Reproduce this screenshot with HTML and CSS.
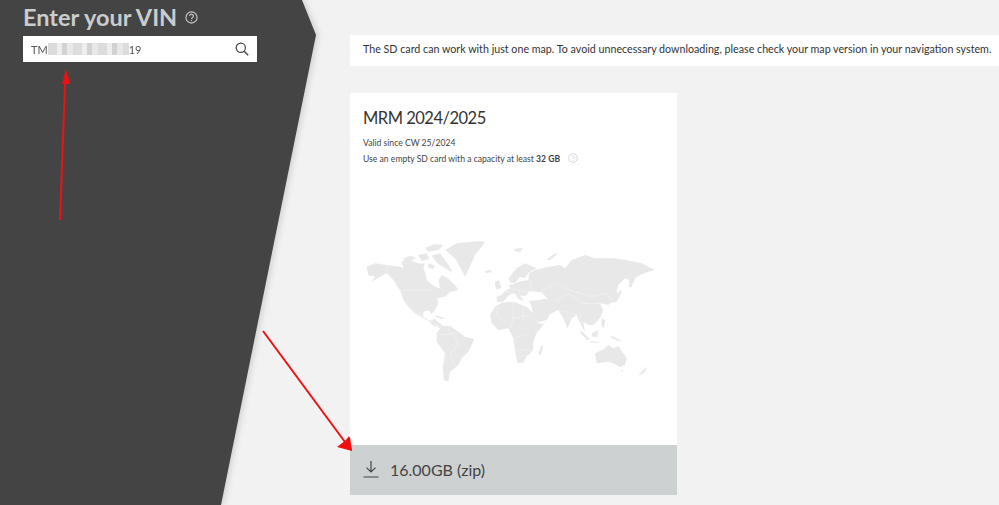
FILE: index.html
```html
<!DOCTYPE html>
<html lang="en">
<head>
    <meta charset="UTF-8">
    <meta name="viewport" content="width=device-width, initial-scale=1.0">
    <title>Map update</title>
    <link rel="stylesheet" href="styles.css">
</head>
<body>
    <div class="page">
        <div class="side-wrap">
            <aside class="side">
                <div class="side-title">
                    <h1>Enter your VIN</h1>
                    <svg class="help-icon" width="13" height="13" viewBox="0 0 13 13">
                        <circle cx="6.5" cy="6.5" r="5.6" fill="none" stroke="#c9cdcd" stroke-width="1.1"/>
                        <path d="M4.6 5.1a1.9 1.9 0 1 1 2.9 1.6c-.7.4-1 .7-1 1.4" fill="none" stroke="#c9cdcd" stroke-width="1.1"/>
                        <circle cx="6.5" cy="9.6" r=".7" fill="#c9cdcd"/>
                    </svg>
                </div>
                <div class="vin-box">
                    <span class="vin-text">TM</span>
                    <span class="vin-blur"></span>
                    <span class="vin-text">19</span>
                    <svg class="search-icon" width="14" height="14" viewBox="0 0 14 14">
                        <circle cx="5.8" cy="5.8" r="4.6" fill="none" stroke="#444" stroke-width="1.2"/>
                        <path d="M9.2 9.2l4 4" stroke="#444" stroke-width="1.4"/>
                    </svg>
                </div>
            </aside>
        </div>

        <main class="content">
            <div class="notice">The SD card can work with just one map. To avoid unnecessary downloading, please check your map version in your navigation system.</div>

            <section class="map-card">
                <div class="card-head">
                    <h2>MRM 2024/2025</h2>
                    <p>Valid since CW 25/2024</p>
                    <p>Use an empty SD card with a capacity at least <b>32 GB</b>
                        <svg class="small-help" width="10" height="10" viewBox="0 0 10 10">
                            <circle cx="5" cy="5" r="4.4" fill="none" stroke="#cfcfcf" stroke-width=".8"/>
                            <path d="M3.7 4a1.3 1.3 0 1 1 2 1.1c-.5.3-.7.5-.7 1" fill="none" stroke="#cfcfcf" stroke-width=".8"/>
                            <circle cx="5" cy="7.4" r=".5" fill="#cfcfcf"/>
                        </svg>
                    </p>
                </div>

                <!-- world map, traced in three groups (americas / eurasia / south) -->
                <svg class="world" width="327" height="170" viewBox="350 225 327 170">
                    <g class="land" transform="translate(360 235) scale(.3333)">
                        <path d="M20 95L45 85 80 90 120 95 130 100 125 78 145 72 165 82 185 88 195 112 200 135 225 155 240 160 236 135 245 120 262 128 285 150 296 165 272 170 255 185 232 190 235 205 225 225 215 237 205 226 190 230 190 245 205 255 215 258 222 250 235 262 250 272 246 278 225 268 210 260 190 250 165 235 145 215 130 195 122 170 100 135 80 115 60 125 35 140 45 125 25 120Z"/>
                        <path d="M255 45L290 25 360 18 375 22 345 60 325 105 315 125 300 95 285 70Z"/>
                        <path d="M215 62L240 55 262 85 278 112 255 100 232 85ZM195 38L225 28 250 30 235 45 205 50ZM125 72L150 62 170 68 150 78ZM175 60L200 55 208 72 185 78ZM205 85L225 92 220 102 205 98ZM170 88L195 85 190 100 175 98ZM145 120L160 118 150 125Z"/>
                        <path d="M225 240L255 250 245 252 228 246Z"/>
                        <path class="border" d="M82 90V118M122 165H215M150 215L195 250"/>
                    </g>
                    <g class="land" transform="translate(485 235) scale(.3333)">
                        <path d="M35 200L35 185 50 180 60 168 75 160 72 150 88 146 100 140 130 135 132 115 150 105 190 95 225 90 240 100 260 75 300 60 330 70 390 70 420 75 470 85 510 105 490 110 465 120 450 130 435 155 432 135 420 130 400 150 395 170 405 185 385 195 370 210 345 205 355 225 345 250 325 270 310 270 295 260 300 290 285 265 275 240 260 250 248 280 235 250 220 225 195 238 185 255 160 262 145 238 138 210 132 198 168 194 178 190 190 195 170 172 132 168 124 182 105 182 118 198 100 192 90 175 72 180 55 200Z"/>
                        <path d="M70 130L95 100 120 85 155 100 132 112 118 130 105 125 90 145 75 142Z"/>
                        <path d="M30 140L42 135 50 160 32 162Z"/>
                        <path d="M0 108L18 105 20 112 4 114Z"/>
                        <path d="M85 42L115 38 105 52 90 48ZM185 75L205 58 220 55 195 75Z"/>
                        <path d="M365 207L390 190 405 165 410 172 395 200Z"/>
                        <path d="M430 155L445 128 450 132 438 158Z"/>
                        <path d="M380 175L392 185 378 202 368 195Z"/>
                        <path class="border" d="M75 160L130 172M100 165L110 195M170 170L210 145 255 165 320 185 360 175 385 195M210 200L250 175 290 205 345 205M220 225L275 240M285 225L290 270M135 135L150 185M60 170L90 175"/>
                    </g>
                    <g class="land" transform="translate(430 300) scale(.3333)">
                        <path d="M180 45L195 20 215 8 250 5 290 20 310 40 325 70 342 72 320 100 310 125 310 150 290 170 280 188 262 188 255 150 250 115 235 85 205 90 185 70Z"/>
                        <path d="M333 140L340 135 332 165 325 162Z"/>
                        <path d="M20 100L35 78 60 78 85 95 105 110 133 118 115 155 95 175 85 195 60 215 55 245 42 240 38 200 45 160 20 125Z"/>
                        <path d="M0 58L20 80 35 78 30 84 14 80 0 68Z"/>
                        <path class="border" d="M205 20L200 45 225 70M250 5L250 55 305 45M250 55L240 85M280 20V60M250 115L300 100M255 150L310 150M265 170L300 165M30 105L70 100 85 135 60 160 75 195M55 80V100M50 160L40 195"/>
                    </g>
                    <g class="land" transform="translate(570 310) scale(.3333)">
                        <path d="M75 130L100 118 115 105 130 115 145 108 170 145 165 165 150 172 130 160 115 155 80 160Z"/>
                        <path d="M152 180L160 180 156 187Z"/>
                        <path d="M205 195L225 175 232 170 222 190Z"/>
                        <path d="M120 75L160 95 145 93 125 84Z"/>
                        <path d="M65 70L85 60 82 80 66 80Z"/>
                        <path d="M30 60L60 88 52 90 32 70ZM60 94L100 97 65 99Z"/>
                        <path d="M95 25L105 30 102 55 94 45Z"/>
                    </g>
                </svg>

                <a class="download-bar" href="#">
                    <svg width="16" height="18" viewBox="0 0 16 18">
                        <path d="M8 1v11M3.5 7.6L8 12l4.500-4.400M.5 17h15" fill="none" stroke="#444" stroke-width="1.200"/>
                    </svg>
                    <span>16.00GB (zip)</span>
                </a>
            </section>
        </main>
    </div>

    <!-- red arrows drawn over the screenshot -->
    <svg class="arrows" width="999" height="505" viewBox="0 0 999 505">
        <path d="M60 220L65 84" stroke="#f01010" stroke-width="2" fill="none"/>
        <path d="M66 69L62 84 70 84Z" fill="#f01010"/>
        <path d="M263 331L345 442" stroke="#f01010" stroke-width="2" fill="none"/>
        <path d="M352 451L349 436 343 444Z" fill="#f01010"/>
        <path d="M352 451L350 437 337 447Z" fill="#f01010"/>
    </svg>
</body>
</html>
```

FILE: styles.css
```css
* {
    box-sizing: border-box;
    margin: 0;
    padding: 0;
}

body {
    background-color: #f2f2f2;
    font-family: 'Lato', 'Open Sans', sans-serif;
    color: #333;
    overflow: hidden;
}

.page {
    display: flex;
    height: 505px;
}

.side-wrap {
    width: 316px;
    flex-shrink: 0;
    filter: drop-shadow(2px 0 3px rgba(0,0,0,0.15));
}

.side {
    height: 100%;
    padding: 4px 0 0 23px;
    background-color: #444444;
    clip-path: polygon(0 0, 302px 0, 316px 35px, 221px 505px, 0 505px);
}

.side-title {
    display: flex;
    align-items: center;
    gap: 8px;
    height: 26px;
}

.side-title h1 {
    font-size: 23.500px;
    font-weight: 700;
    line-height: 26px;
    color: #c9cdcd;
}

.vin-box {
    display: flex;
    align-items: center;
    width: 234px;
    height: 26px;
    margin-top: 6px;
    padding: 0 8px;
    background-color: white;
    font-size: 11px;
    color: #555;
}

.vin-blur {
    width: 81px;
    height: 12px;
    background: repeating-linear-gradient(90deg, #dcdcdc 0 9px, #eeeeee 9px 14px, #d2d2d2 14px 19px, #e8e8e8 19px 25px);
}

.search-icon {
    margin-left: auto;
}

.content {
    padding: 35px 0 0 34px;
    flex: 1;
    min-width: 0;
}

.notice {
    height: 31px;
    padding-left: 13px;
    background-color: white;
    font-size: 10.700px;
    line-height: 28px;
    white-space: nowrap;
    color: #333;
}

.map-card {
    display: flex;
    flex-direction: column;
    width: 327px;
    height: 402px;
    margin-top: 27px;
    background-color: white;
}

.card-head {
    height: 132px;
    padding: 14px 13px 0;
}

.card-head h2 {
    font-size: 16.500px;
    font-weight: 400;
    letter-spacing: -0.5px;
    line-height: 22px;
    margin-bottom: 6px;
}

.card-head p {
    font-size: 8.600px;
    line-height: 16px;
    color: #444;
}

.card-head b {
    font-weight: 700;
}

.small-help {
    margin-left: 6px;
    vertical-align: -1px;
}

.world {
    display: block;
}

.land path {
    fill: #e8e8e8;
}

.land .border {
    fill: none;
    stroke: #f7f7f7;
    stroke-width: 1.500;
}

.download-bar {
    display: flex;
    align-items: center;
    gap: 11px;
    height: 50px;
    margin-top: auto;
    padding: 0 13px 2px;
    background-color: #cdd1d1;
    color: #444;
    font-size: 16px;
    text-decoration: none;
}

.arrows {
    position: absolute;
    top: 0;
    left: 0;
    pointer-events: none;
}
```
